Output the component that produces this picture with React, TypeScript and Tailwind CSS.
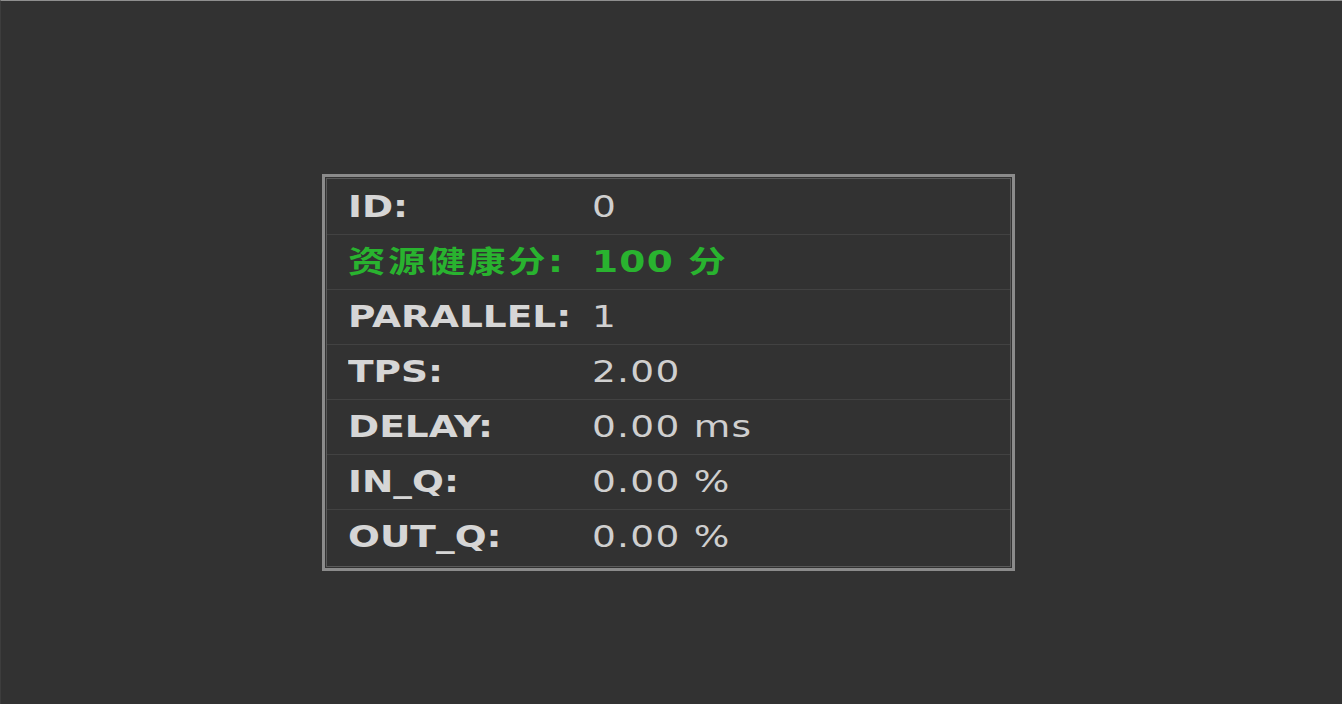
const rows: { label: string; value: string; green?: boolean }[] = [
  { label: "ID:", value: "0" },
  { label: "资源健康分:", value: "100 分", green: true },
  { label: "PARALLEL:", value: "1" },
  { label: "TPS:", value: "2.00" },
  { label: "DELAY:", value: "0.00 ms" },
  { label: "IN_Q:", value: "0.00 %" },
  { label: "OUT_Q:", value: "0.00 %" },
];

export default function App() {
  return (
    <div className="h-[704px] w-[1342px] overflow-hidden border-t border-l border-t-[#8f8f8f] border-l-[#3d3d3d] bg-[#323232] pt-[173px] pl-[321px] font-['DejaVu_Sans','Noto_Sans_CJK_SC',sans-serif]">
      <div className="w-[693px] border-[3px] border-[#8b8b8b] p-px">
        <ul className="border border-[#5a5a5a] pb-[2px]">
          {rows.map((r, i) => (
            <li
              key={r.label}
              className={`flex h-[55px] items-center pl-[21px] text-[30px] leading-none ${
                i > 0 ? "border-t border-[#424242]" : ""
              } ${r.green ? "text-[#29b32f]" : "text-[#d6d6d6]"}`}
            >
              <span className="w-[244px] shrink-0">
                <span className={`inline-block origin-left scale-x-[1.25] font-bold ${r.green ? "tracking-[2px]" : ""}`}>
                  {r.label}
                </span>
              </span>
              <span
                className={`inline-block origin-left scale-x-[1.25] tracking-[1px] ${r.green ? "font-bold" : "text-[#cfcfcf]"}`}
              >
                {r.value}
              </span>
            </li>
          ))}
        </ul>
      </div>
    </div>
  );
}
